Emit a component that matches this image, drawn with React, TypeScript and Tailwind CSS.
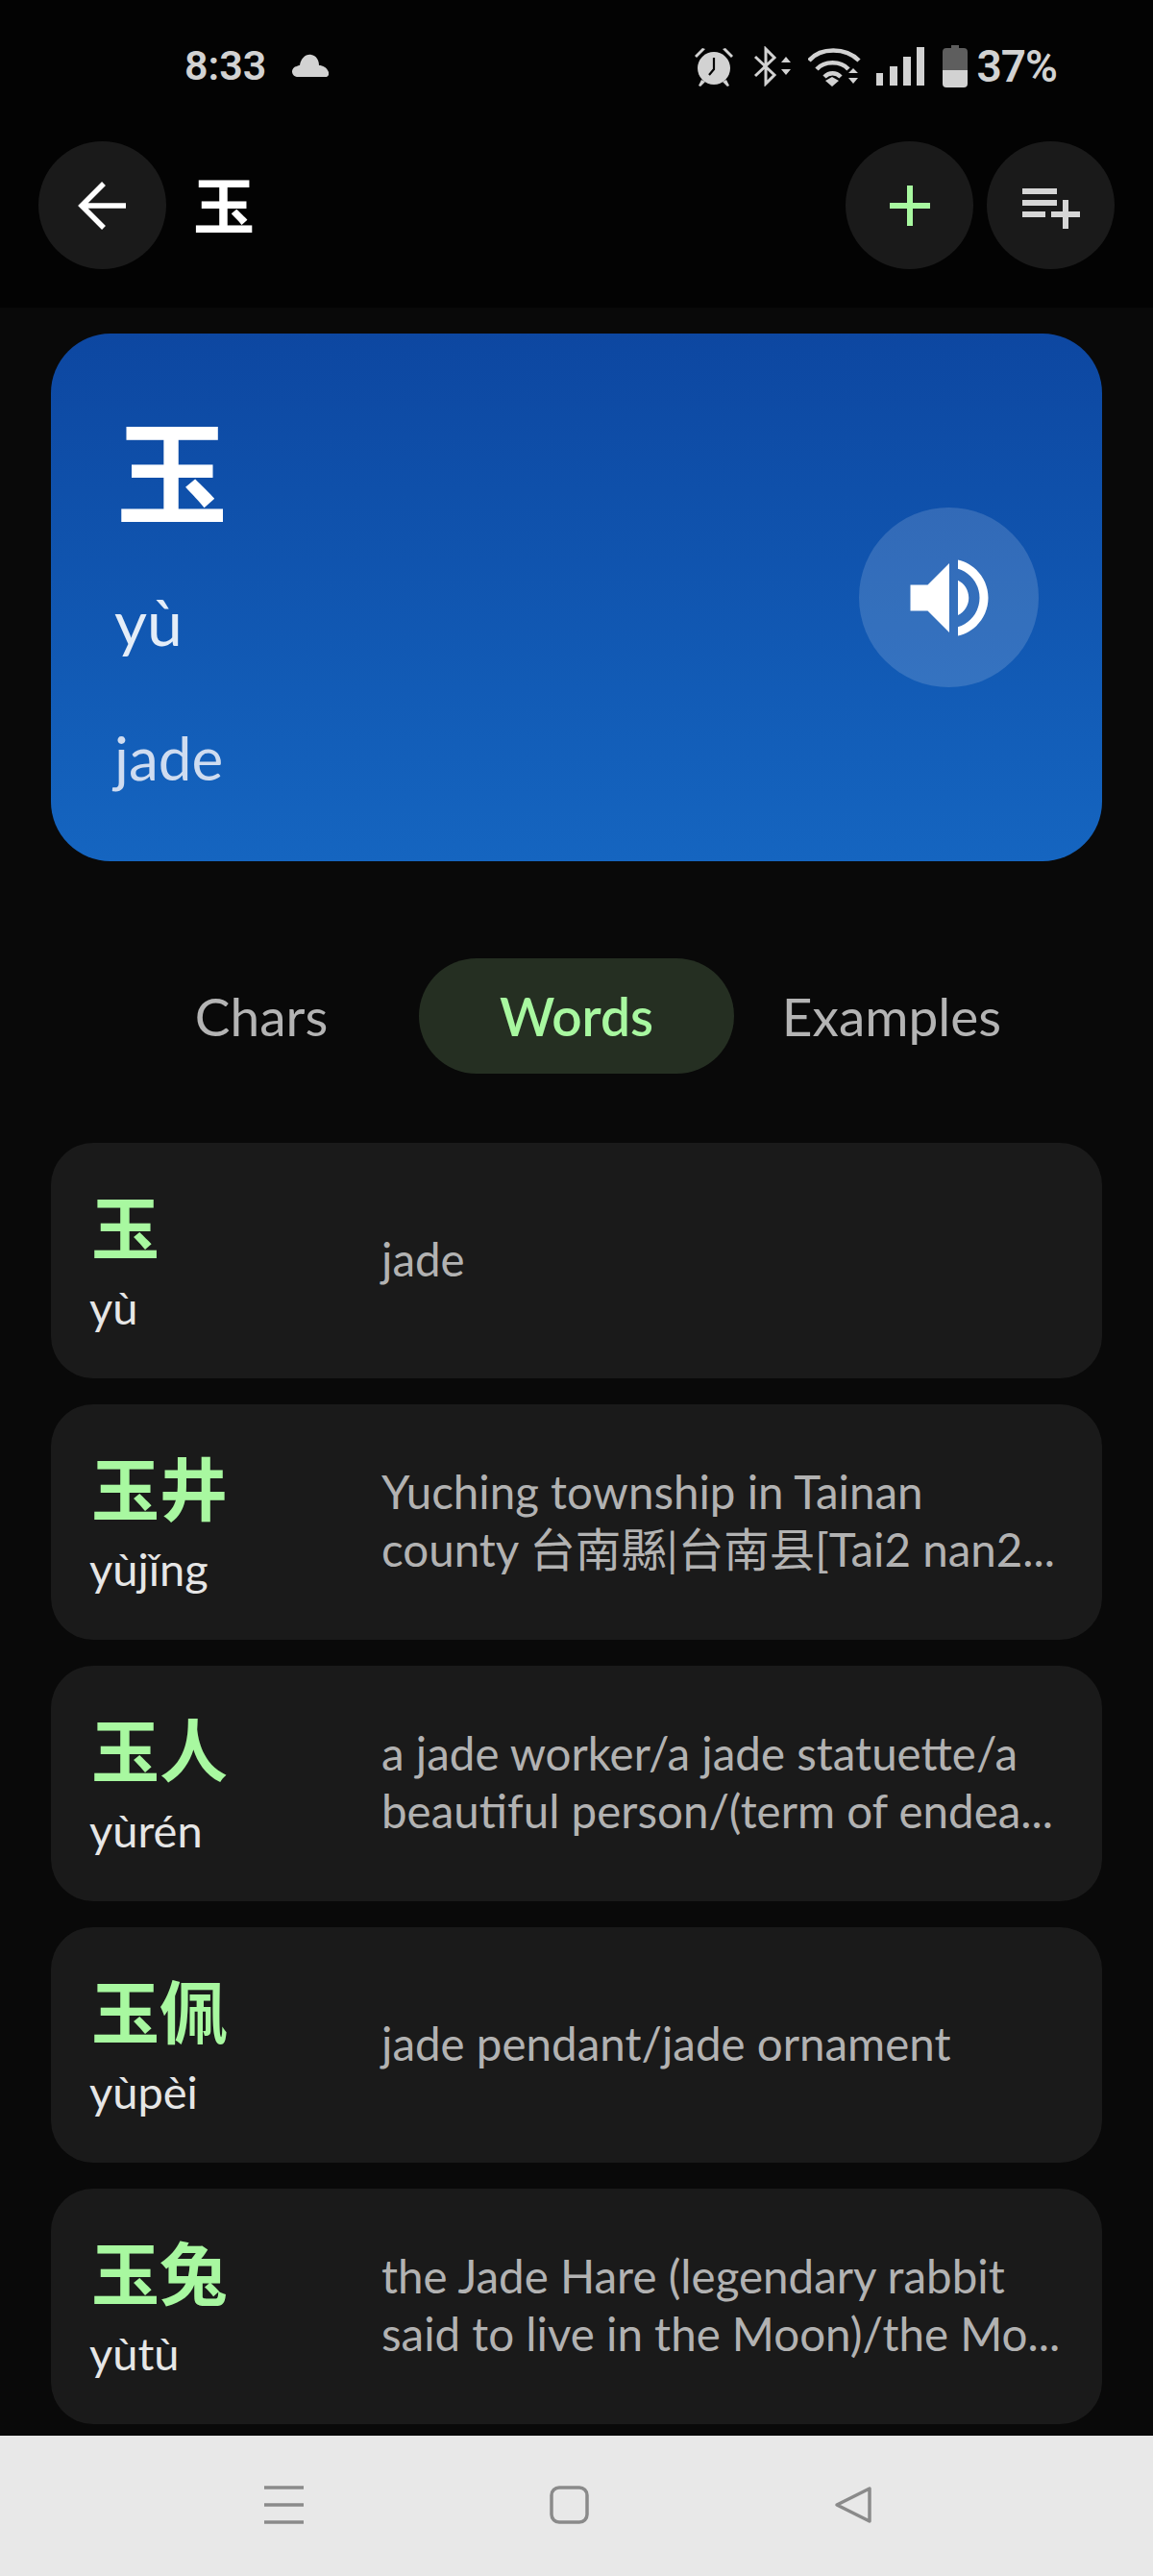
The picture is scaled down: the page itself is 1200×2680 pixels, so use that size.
const CJK = '"Noto Sans CJK SC"';

const words = [
  { han: '玉', pinyin: 'yù', def: 'jade' },
  { han: '玉井', pinyin: 'yùjǐng', def: 'Yuching township in Tainan\ncounty 台南縣|台南县[Tai2 nan2...' },
  { han: '玉人', pinyin: 'yùrén', def: 'a jade worker/a jade statuette/a\nbeautiful person/(term of endea...' },
  { han: '玉佩', pinyin: 'yùpèi', def: 'jade pendant/jade ornament' },
  { han: '玉兔', pinyin: 'yùtù', def: 'the Jade Hare (legendary rabbit\nsaid to live in the Moon)/the Mo...' },
];

function RoundButton({ children }: { children: React.ReactNode }) {
  return (
    <button className="w-[133px] h-[133px] rounded-full bg-[#1a1a1a] flex items-center justify-center">
      {children}
    </button>
  );
}

function StatusIcons() {
  return (
    <div className="flex items-center text-[#d2d2d2]">
      {/* alarm */}
      <svg width="42" height="42" viewBox="0 0 42 42" fill="currentColor">
        <path d="M1 10 9 2l3 1-9 9zM41 10l-8-8-3 1 9 9z" />
        <circle cx="21" cy="23" r="17" />
        <path d="M8 35l-3 6 2 1 5-5zM34 35l3 6-2 1-5-5z" />
        <path d="M21 12v12l-5 6" fill="none" stroke="#050505" strokeWidth="2.2" />
      </svg>
      {/* bluetooth */}
      <svg className="ml-[20px]" width="40" height="42" viewBox="0 0 40 42" fill="none" stroke="currentColor" strokeWidth="3">
        <path d="M2 11l20 19-9 9V3l9 9L2 31" />
        <path d="M29 17l5-6 5 6zM29 24l5 6 5-6z" fill="currentColor" stroke="none" />
      </svg>
      {/* wifi */}
      <svg className="ml-[17px]" width="55" height="42" viewBox="0 0 55 42" fill="none" stroke="currentColor" strokeWidth="4.5">
        <path d="M1 15C13 1 39 1 53 15M9 24c8-9 25-9 33 0M17 32c5-5 12-5 17 0" />
        <path d="M18 36l7-4 7 4-7 6zM42 28l5-5 5 5zM42 33l5 6 5-6z" fill="currentColor" stroke="none" />
      </svg>
      {/* signal */}
      <svg className="ml-[16px]" width="50" height="42" viewBox="0 0 50 42" fill="currentColor">
        <path d="M0 28h7v13H0zM14 21h8v20h-8zM28 11h8v30h-8zM42 1h8v40h-8z" />
      </svg>
      {/* battery */}
      <svg className="ml-[19px]" width="26" height="44" viewBox="0 0 26 44">
        <path d="M9 0h8v3h5a4 4 0 0 1 4 4v20H0V7a4 4 0 0 1 4-4h5z" fill="#5e5e5e" />
        <path d="M0 26h26v14a4 4 0 0 1-4 4H4a4 4 0 0 1-4-4z" fill="currentColor" />
      </svg>
      <span className="ml-[10px] text-[46px] leading-none font-semibold tracking-[-1px] font-['Roboto',sans-serif]">37%</span>
    </div>
  );
}

function WordCard({ han, pinyin, def }: { han: string; pinyin: string; def: string }) {
  return (
    <div className="h-[245px] rounded-[44px] bg-[#1a1a1a] flex items-center pl-[40px] pr-[44px]">
      <div className="w-[304px] shrink-0 pb-[5px]">
        <div className="text-[71px] leading-[84px] font-bold text-[#a8f8a0] pl-[2px] font-['Noto_Sans_CJK_SC',sans-serif]">{han}</div>
        <div className="mt-[17px] text-[47px] leading-[56px] text-[#e6e6e6]">{pinyin}</div>
      </div>
      <p className="flex-1 pb-[3px] text-[47.5px] leading-[60px] text-[#b2b2b2] whitespace-pre">{def}</p>
    </div>
  );
}

export default function App() {
  return (
    <div
      className="w-[1200px] h-[2680px] flex flex-col overflow-hidden bg-[#090909]"
      style={{ fontFamily: `Lato, ${CJK}, sans-serif` }}
    >
      <header className="h-[320px] shrink-0 bg-[#030303]">
        <div className="h-[137px] pt-[46px] pl-[192px] pr-[100px] flex items-start justify-between text-[#d2d2d2]">
          <div className="flex items-center h-[44px]">
            <span className="text-[43px] leading-none font-semibold font-['Roboto',sans-serif]">8:33</span>
            <svg className="ml-[27px]" width="38" height="24" viewBox="0 0 38 24" fill="currentColor">
              <path d="M6 24a5.500 5.500 0 0 1-1-11c1-1 2-1 3-1 1-7 6-12 12-11 5 1 8 5 8 11 4 0 8 2 10 7 1 3-1 5-3 5z" />
            </svg>
          </div>
          <StatusIcons />
        </div>
        <div className="mt-[10px] pl-[40px] pr-[40px] flex items-center">
          <RoundButton>
            <svg width="72" height="72" viewBox="0 0 72 72" fill="none" stroke="#ffffff" strokeWidth="5.500">
              <path d="M60 36H16M37 13 14 36l23 23" />
            </svg>
          </RoundButton>
          <span className="ml-[28px] pb-[8px] text-[64px] leading-none font-bold text-white font-['Noto_Sans_CJK_SC',sans-serif]">玉</span>
          <div className="ml-auto flex gap-[14px]">
            <RoundButton>
              <svg width="72" height="72" viewBox="0 0 24 24" fill="#a8f8a0">
                <path d="M19 13h-6v6h-2v-6H5v-2h6V5h2v6h6v2z" />
              </svg>
            </RoundButton>
            <RoundButton>
              <svg width="72" height="72" viewBox="0 0 24 24" fill="#d6d6d6">
                <path d="M14 10H2v2h12v-2zm0-4H2v2h12V6zm4 8v-4h-2v4h-4v2h4v4h2v-4h4v-2h-4zM2 16h8v-2H2v2z" />
              </svg>
            </RoundButton>
          </div>
        </div>
      </header>

      <main className="flex-1 px-[53px] pt-[27px]">
        <section className="h-[549px] pb-[10px] rounded-[62px] bg-gradient-to-b from-[#0d47a1] to-[#1565c0] flex items-center justify-between pl-[66px] pr-[66px]">
          <div className="flex flex-col">
            <div className="text-[116px] leading-[150px] font-bold text-white pl-[2px] font-['Noto_Sans_CJK_SC',sans-serif]">玉</div>
            <div className="mt-[45px] text-[66px] leading-[84px] text-[#e4edf8]">yù</div>
            <div className="mt-[63px] text-[62px] leading-[72px] text-[#cfdcf0]">jade</div>
          </div>
          <button className="w-[187px] h-[187px] mt-[10px] rounded-full bg-white/15 flex items-center justify-center">
            <svg width="108" height="108" viewBox="0 0 24 24" fill="#ffffff">
              <path d="M3 9v6h4l5 5V4L7 9H3zm13.500 3c0-1.770-1.020-3.290-2.500-4.030v8.050c1.480-.73 2.500-2.250 2.500-4.020zM14 3.230v2.060c2.890.86 5 3.540 5 6.710s-2.110 5.850-5 6.710v2.060c4.010-.91 7-4.490 7-8.770s-2.990-7.860-7-8.770z" />
            </svg>
          </button>
        </section>

        <nav className="mt-[101px] mx-auto w-[984px] grid grid-cols-3 text-[55px]">
          <div className="h-[120px] flex items-center justify-center text-[#b4b4b4]">Chars</div>
          <div className="h-[120px] rounded-[60px] bg-[#252f22] flex items-center justify-center font-semibold text-[#a8f8a0]">Words</div>
          <div className="h-[120px] flex items-center justify-center text-[#b4b4b4]">Examples</div>
        </nav>

        <div className="mt-[72px] flex flex-col gap-[27px]">
          {words.map((w) => (
            <WordCard key={w.han} han={w.han} pinyin={w.pinyin} def={w.def} />
          ))}
        </div>
      </main>

      <footer className="h-[146px] shrink-0 bg-[#e8e8e8] flex items-start pt-[52px] pl-[275px]">
        <svg width="41" height="40" viewBox="0 0 41 40" stroke="#8a8a8a" strokeWidth="3.500">
          <path d="M0 2h41M0 20h41M0 38h41" />
        </svg>
        <svg className="ml-[256px]" width="41" height="40" viewBox="0 0 41 40" fill="none" stroke="#8a8a8a" strokeWidth="3.500">
          <rect x="2" y="2" width="37" height="36" rx="8" />
        </svg>
        <svg className="ml-[255px]" width="40" height="40" viewBox="0 0 40 40" fill="none" stroke="#8a8a8a" strokeWidth="3.500" strokeLinejoin="round">
          <path d="M37 3v34L3 20z" />
        </svg>
      </footer>
    </div>
  );
}
